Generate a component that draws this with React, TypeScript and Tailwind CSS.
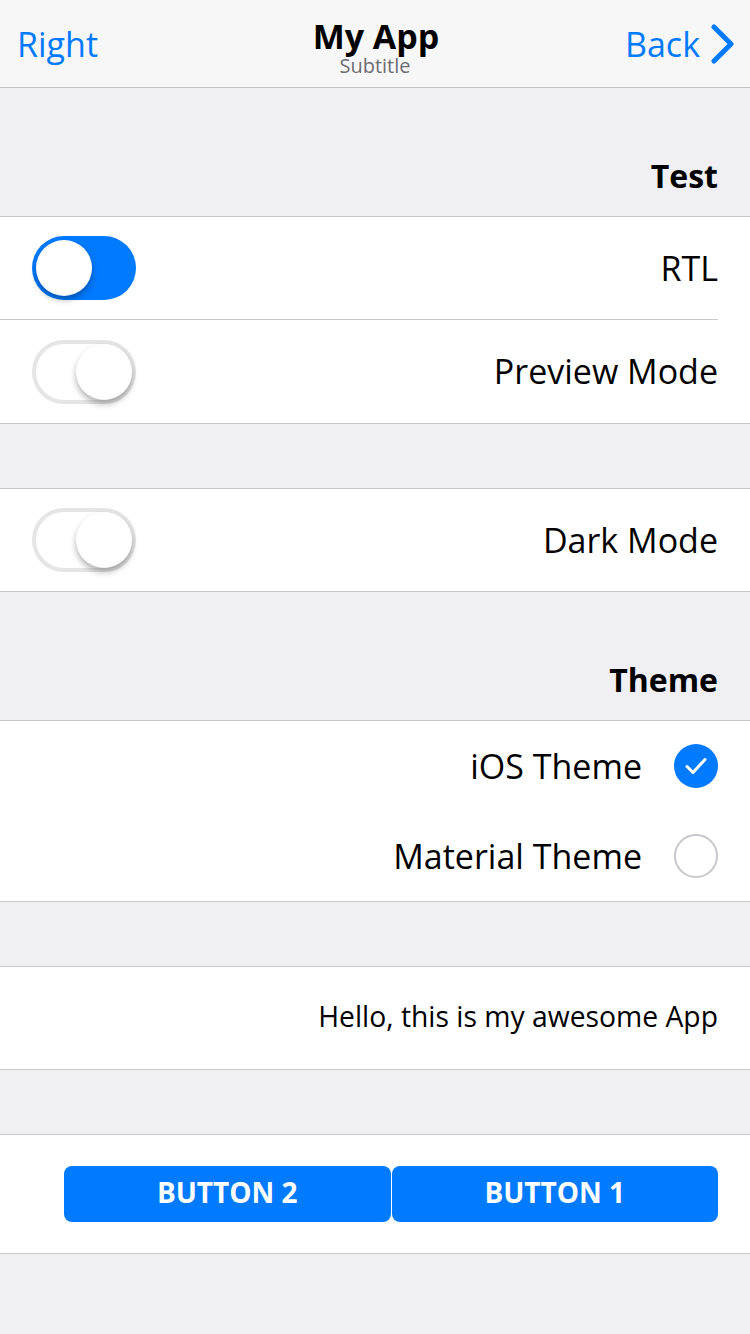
import React from 'react';

const font = { fontFamily: '"Open Sans", "Noto Sans", sans-serif' };

function Toggle({ on }: { on: boolean }) {
  if (on) {
    return (
      <div className="w-[104px] h-[64px] rounded-full bg-[#007aff] flex items-center pl-[4px]">
        <div className="w-[56px] h-[56px] rounded-full bg-white shadow-[0_4px_6px_rgba(0,0,0,0.3)]" />
      </div>
    );
  }
  return (
    <div className="w-[104px] h-[64px] rounded-full bg-white border-[4px] border-[#e5e5e5] flex items-center justify-end">
      <div className="w-[56px] h-[56px] rounded-full bg-white shadow-[0_4px_6px_rgba(0,0,0,0.3)]" />
    </div>
  );
}

function Radio({ checked }: { checked: boolean }) {
  if (checked) {
    return (
      <div className="w-[44px] h-[44px] rounded-full bg-[#007aff] flex items-center justify-center">
        <svg width="24" height="20" viewBox="0 0 24 20" fill="none">
          <path d="M3 10.5 L9 16.5 L21 3.5" stroke="white" strokeWidth="3" strokeLinecap="round" strokeLinejoin="round" />
        </svg>
      </div>
    );
  }
  return <div className="w-[44px] h-[44px] rounded-full border-[2px] border-[#c7c7cc] bg-white" />;
}

function SectionTitle({ children }: { children: React.ReactNode }) {
  return (
    <div className="h-[128px] flex items-end justify-end px-[32px] pb-[20px]">
      <span className="text-[32px] leading-[40px] font-bold text-black">{children}</span>
    </div>
  );
}

export default function App() {
  return (
    <div className="w-[750px] min-h-[1334px] bg-[#efeff4] text-black" style={font}>
      {/* Navbar */}
      <div className="h-[88px] bg-[#f7f7f8] border-b border-[#c4c4c4] flex items-center justify-between relative">
        <span className="text-[34px] text-[#007aff] pl-[17px] pt-[2px]">Right</span>
        <div className="absolute left-0 right-0 top-[18px] flex flex-col items-center">
          <span className="text-[34px] leading-[36px] font-bold ml-[2px]">My App</span>
          <span className="text-[20px] leading-[22px] text-[#6d6d72] mt-[1px]">Subtitle</span>
        </div>
        <div className="flex items-center gap-[10px] pr-[14px]">
          <span className="text-[34px] text-[#007aff] pt-[2px]">Back</span>
          <svg width="26" height="40" viewBox="0 0 26 40" fill="none">
            <path d="M4 3 L21 20 L4 37" stroke="#007aff" strokeWidth="5" strokeLinecap="round" strokeLinejoin="round" />
          </svg>
        </div>
      </div>

      <SectionTitle>Test</SectionTitle>

      <div className="bg-white border-t border-b border-[#c8c7cc]">
        <div className="h-[103px] flex items-center justify-between pl-[32px] border-b border-[#c8c7cc] mr-[32px]">
          <Toggle on />
          <span className="text-[34px]">RTL</span>
        </div>
        <div className="h-[103px] flex items-center justify-between px-[32px]">
          <Toggle on={false} />
          <span className="text-[34px]">Preview Mode</span>
        </div>
      </div>

      <div className="h-[64px]" />

      <div className="bg-white border-t border-b border-[#c8c7cc]">
        <div className="h-[102px] flex items-center justify-between px-[32px]">
          <Toggle on={false} />
          <span className="text-[34px]">Dark Mode</span>
        </div>
      </div>

      <SectionTitle>Theme</SectionTitle>

      <div className="bg-white border-t border-b border-[#c8c7cc]">
        <div className="h-[90px] flex items-center justify-end gap-[32px] px-[32px]">
          <span className="text-[34px]">iOS Theme</span>
          <Radio checked />
        </div>
        <div className="h-[90px] flex items-center justify-end gap-[32px] px-[32px]">
          <span className="text-[34px]">Material Theme</span>
          <Radio checked={false} />
        </div>
      </div>

      <div className="h-[64px]" />

      <div className="bg-white border-t border-b border-[#c8c7cc] h-[104px] flex items-center justify-end px-[32px] pb-[4px]">
        <span className="text-[28.3px]">Hello, this is my awesome App</span>
      </div>

      <div className="h-[64px]" />

      <div className="bg-white border-t border-b border-[#c8c7cc] py-[31px] pl-[64px] pr-[32px] flex gap-[1px]">
        <button className="flex-1 h-[56px] rounded-[8px] bg-[#007aff] text-white text-[28px] font-bold uppercase pb-[4px]">
          Button 2
        </button>
        <button className="flex-1 h-[56px] rounded-[8px] bg-[#007aff] text-white text-[28px] font-bold uppercase pb-[4px]">
          Button 1
        </button>
      </div>
    </div>
  );
}
